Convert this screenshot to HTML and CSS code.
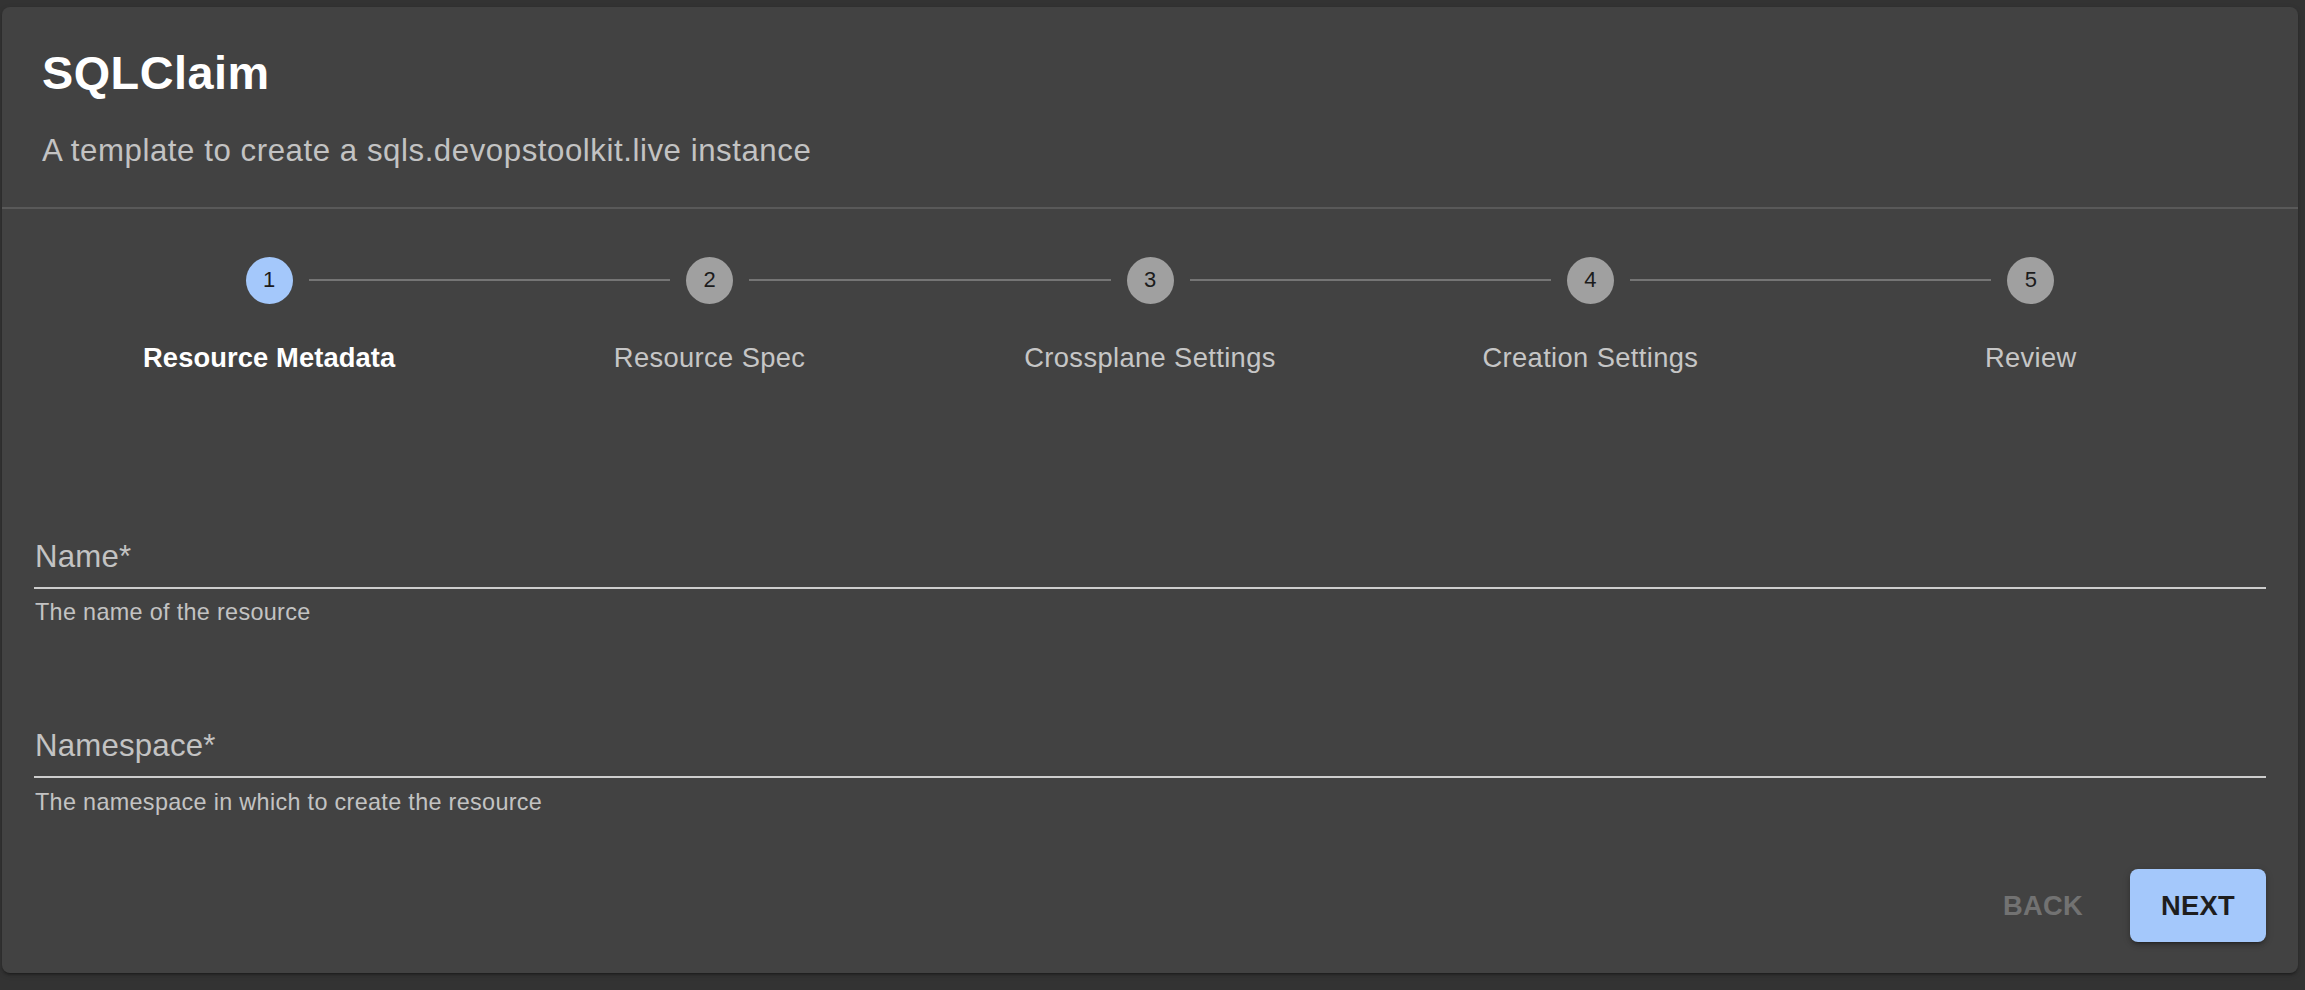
FILE: index.html
```html
<!DOCTYPE html>
<html lang="en">
<head>
<meta charset="utf-8">
<title>SQLClaim</title>
<link rel="stylesheet" href="styles.css">
</head>
<body>
<div class="card">
  <div class="card-header">
    <h1 class="title">SQLClaim</h1>
    <p class="subtitle">A template to create a sqls.devopstoolkit.live instance</p>
  </div>
  <div class="divider"></div>
  <div class="stepper">
    <div class="step step-active step-first">
      <div class="step-head"><span class="line"></span><span class="circle">1</span><span class="line"></span></div>
      <div class="step-label">Resource Metadata</div>
    </div>
    <div class="step">
      <div class="step-head"><span class="line"></span><span class="circle">2</span><span class="line"></span></div>
      <div class="step-label">Resource Spec</div>
    </div>
    <div class="step">
      <div class="step-head"><span class="line"></span><span class="circle">3</span><span class="line"></span></div>
      <div class="step-label">Crossplane Settings</div>
    </div>
    <div class="step">
      <div class="step-head"><span class="line"></span><span class="circle">4</span><span class="line"></span></div>
      <div class="step-label">Creation Settings</div>
    </div>
    <div class="step step-last">
      <div class="step-head"><span class="line"></span><span class="circle">5</span><span class="line"></span></div>
      <div class="step-label">Review</div>
    </div>
  </div>
  <div class="form">
    <div class="field">
      <div class="field-input">Name*</div>
      <div class="helper">The name of the resource</div>
    </div>
    <div class="field field-next">
      <div class="field-input">Namespace*</div>
      <div class="helper">The namespace in which to create the resource</div>
    </div>
    <div class="actions">
      <button class="btn btn-back" type="button">BACK</button>
      <button class="btn btn-next" type="button">NEXT</button>
    </div>
  </div>
</div>
</body>
</html>
```

FILE: styles.css
```css
* {
  box-sizing: border-box;
}

html, body {
  margin: 0;
  background: #333333;
}

body {
  padding: 7px 7px 17px 2px;
  font-family: "Liberation Sans", Arial, Helvetica, sans-serif;
}

.card {
  background: #424242;
  border-radius: 8px;
  box-shadow: 0 3px 2px -2px rgba(0, 0, 0, 0.25), 0 2px 3px 0 rgba(0, 0, 0, 0.16), 0 2px 6px 0 rgba(0, 0, 0, 0.12);
  overflow: hidden;
}

.card-header {
  padding: 35px 31px 32px 40px;
}

.title {
  margin: 0;
  font-size: 46.8px;
  line-height: 62.4px;
  font-weight: 700;
  letter-spacing: 0.5px;
  color: #ffffff;
}

.subtitle {
  margin: 23.6px 0 0;
  font-size: 31.2px;
  line-height: 46.8px;
  letter-spacing: 0.56px;
  color: #c3c3c3;
}

.divider {
  height: 2px;
  background: #595959;
}

.stepper {
  display: grid;
  grid-template-columns: repeat(5, 1fr);
  padding: 48px 47px 0;
}

.step {
  display: flex;
  flex-direction: column;
  align-items: center;
}

.step-head {
  display: flex;
  align-items: center;
  width: 100%;
}

.line {
  flex: 1;
  height: 2px;
  background: #757575;
}

.step-first .line:first-child,
.step-last .line:last-child {
  visibility: hidden;
}

.circle {
  width: 47px;
  height: 47px;
  margin: 0 16px;
  border-radius: 50%;
  background: #a0a0a0;
  color: #1c1c1c;
  font-size: 22px;
  display: flex;
  align-items: center;
  justify-content: center;
}

.step-active .circle {
  background: #a4c8fb;
}

.step-label {
  margin-top: 34px;
  font-size: 27.3px;
  line-height: 39px;
  letter-spacing: 0.38px;
  color: #c6c6c6;
  text-align: center;
}

.step-active .step-label {
  color: #ffffff;
  font-weight: 700;
  letter-spacing: 0.12px;
}

.form {
  padding: 162px 32px 31px 32px;
}

.field-input {
  font-size: 31.2px;
  line-height: 36px;
  padding: 0 0 12px 1px;
  border-bottom: 2px solid #cdcdcd;
  color: #c3c3c3;
  letter-spacing: 0.2px;
}

.helper {
  margin-top: 4.5px;
  font-size: 23.4px;
  line-height: 38.8px;
  letter-spacing: 0.32px;
  color: #c3c3c3;
  padding-left: 1px;
}

.field-next {
  margin-top: 96px;
}

.actions {
  display: flex;
  justify-content: flex-end;
  gap: 16px;
  margin-top: 48px;
}

.btn {
  font-family: "Liberation Sans", Arial, Helvetica, sans-serif;
  font-size: 27.3px;
  font-weight: 700;
  letter-spacing: 0.3px;
  line-height: 48px;
  padding: 12.5px 31px;
  min-width: 125px;
  border: none;
  border-radius: 8px;
  background: transparent;
  cursor: pointer;
}

.btn-back {
  color: #727272;
}

.btn-next {
  background: #a4c8fb;
  color: #1e1e1e;
  box-shadow: 0 4px 2px -3px rgba(0, 0, 0, 0.25), 0 3px 4px 0 rgba(0, 0, 0, 0.16), 0 2px 9px 0 rgba(0, 0, 0, 0.14);
}
```
